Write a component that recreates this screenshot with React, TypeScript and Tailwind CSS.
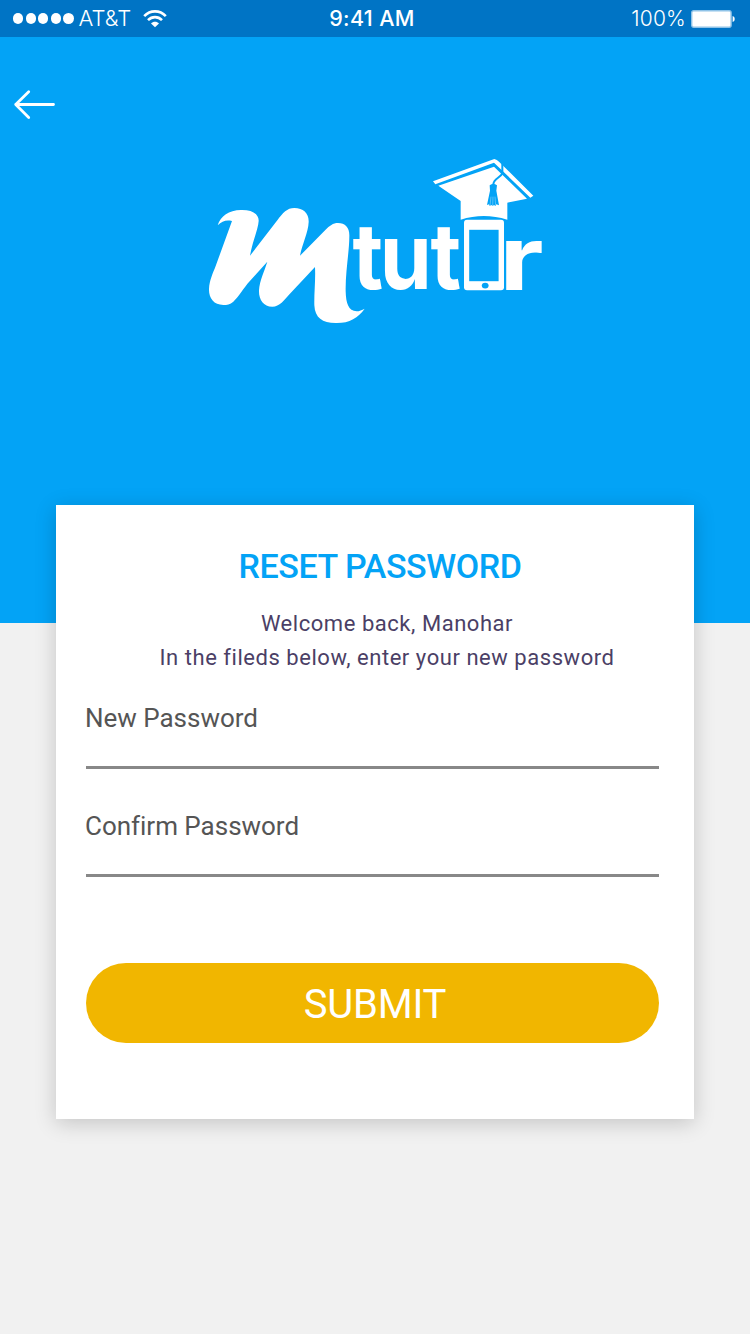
const signalDots = [0, 1, 2, 3, 4];

function StatusBar() {
  return (
    <div className="flex h-[37px] items-center bg-[#0074c5] px-3 font-['Inter',sans-serif] text-white">
      <div className="flex flex-1 items-center">
        <div className="flex gap-[2.4px] pl-px">
          {signalDots.map((dot) => (
            <span key={dot} className="size-[10.2px] rounded-full bg-white" />
          ))}
        </div>
        <span className="ml-[5px] pb-px text-[22px] leading-none font-light">AT&amp;T</span>
        <svg className="ml-[11.5px] h-[18px] w-6" viewBox="0 0 24 18" fill="none" stroke="white" strokeWidth="2.6">
          <path d="M1.2 6.2C7.2 -0.2 16.8 -0.2 22.8 6.2" />
          <path d="M5 10.1C9 6.1 15 6.1 19 10.1" />
          <path d="M12 17.2L8 13.4C10.2 11.2 13.8 11.2 16 13.4Z" fill="white" stroke="none" />
        </svg>
      </div>
      <span className="mr-[6px] text-[21.5px] leading-none font-medium tracking-[0.35px]">9:41 AM</span>
      <div className="flex flex-1 items-center justify-end">
        <span className="text-[21px] leading-none font-light tracking-[0.2px]">100%</span>
        <svg className="ml-[5px] mr-[2px] h-[18px] w-[45px]" viewBox="0 0 45 18">
          <rect x="0.7" y="0.7" width="39.4" height="16.6" rx="2" fill="white" stroke="#8fc3e8" strokeWidth="1.4" />
          <path d="M41.6 6C44.4 6.5 44.4 11.5 41.6 12Z" fill="white" />
        </svg>
      </div>
    </div>
  );
}

function Logo() {
  return (
    <svg
      className="mt-[33px] ml-[205px] h-[172px] w-[342px]"
      viewBox="205 155 342 172"
      fill="white"
      role="img"
      aria-label="Mtutor"
    >
      <g transform="translate(200 200) scale(0.33333)">
        <path d="M53 76C62 48 86 31 123 30C158 29 177 43 176 63C175 86 157 126 150 167L232 61C249 38 261 24 283 24C310 24 327 40 326 66C325 96 306 135 300 167L376 90C389 77 399 69 414 69C436 69 449 84 448 108C448 156 436 214 437 274C438 310 445 333 470 334C478 334 486 330 494 326C474 354 447 370 407 369C367 369 345 354 343 316C342 281 347 240 345 201L267 284C253 299 239 320 217 320C190 320 176 298 177 271C179 241 193 214 202 185L149 244C131 264 114 293 100 305C90 314 81 315 70 315C41 315 26 294 27 267C28 241 39 219 47 198L96 63C79 59 66 63 53 76Z" />
      </g>
      <g fontFamily="Inter, sans-serif" fontWeight="700" fontSize="88">
        <text transform="translate(352.6 289.4) scale(0.95 1.03)" x="0 28.6 82" y="0">
          tut
        </text>
        <text transform="translate(499.6 290) scale(1.23 1.01)">r</text>
      </g>
      <rect x="464" y="219.8" width="40" height="70.4" rx="3" />
      <rect x="469.2" y="229.8" width="29.4" height="51.4" fill="#03a3f6" />
      <ellipse cx="485.2" cy="285.6" rx="3.4" ry="2.9" fill="#03a3f6" />
      <g transform="translate(425 150) scale(0.33333)">
        <path d="M24 94L208 27Q216 29 222 35L325 137L316 143L207 38L31 103Z" />
        <path d="M40 107L207 50L306 146L247 158V209Q176 187 107 209V153Z" />
        <path d="M232 42V70C226 84 206 85 205 103" fill="none" stroke="#03a3f6" strokeWidth="6" />
        <path d="M194 106Q205 96 216 106L214 122L222 166L214 163L212 168L207 165L203 168L199 165L194 168L192 163L186 165L195 122Z" fill="#03a3f6" />
        <path d="M198 140L195 167M204 140L203 168M210 140L212 167" fill="none" stroke="white" strokeWidth="1" />
      </g>
    </svg>
  );
}

function Field({ label, id }: { label: string; id: string }) {
  return (
    <div className="mb-[6px] h-[102px] border-b-[3px] border-[#888888]">
      <label htmlFor={id} className="-ml-px block pt-[36px] text-[26px] leading-[30px] tracking-[-0.02px] text-[#555555]">
        {label}
      </label>
      <input id={id} type="password" className="block h-[30px] w-full bg-transparent outline-none" />
    </div>
  );
}

export default function App() {
  return (
    <div className="h-[1334px] w-[750px] overflow-hidden bg-[#f1f1f1] font-['Roboto',sans-serif]">
      <header className="h-[623px] bg-[#03a3f6]">
        <StatusBar />
        <button type="button" aria-label="Back" className="mt-[52px] ml-[13px] block h-[33px] w-[44px]">
          <svg
            className="h-[33px] w-[44px]"
            viewBox="0 0 44 33"
            fill="none"
            stroke="white"
            strokeWidth="2.8"
            strokeLinecap="round"
            strokeLinejoin="round"
          >
            <path d="M15.7 2.8L2.7 15.5L15.7 28.4M2.7 15.5H40.5" />
          </svg>
        </button>
        <Logo />
      </header>
      <main className="relative -mt-[118px] ml-14 h-[614px] w-[638px] bg-white px-[30px] pt-[41px] shadow-[0_4px_20px_rgba(0,0,0,0.19)]">
        <h1 className="pl-[10px] text-center text-[34px] leading-[40px] font-medium tracking-[-0.42px] whitespace-nowrap text-[#03a3f6]">
          RESET PASSWORD
        </h1>
        <p className="mt-[21px] -mr-[24px] text-center text-[22px] leading-[34px] tracking-[0.54px] whitespace-nowrap text-[#4b3f66]">
          Welcome back, Manohar
          <br />
          In the fileds below, enter your new password
        </p>
        <form className="-mt-[8px] w-[573px]" onSubmit={(event) => event.preventDefault()}>
          <Field label="New Password" id="new-password" />
          <Field label="Confirm Password" id="confirm-password" />
          <button
            type="submit"
            className="mt-[80px] h-20 w-full rounded-full bg-[#f1b600] pt-[3px] pl-[5px] text-center text-[40px] leading-[77px] tracking-[-0.2px] text-white"
          >
            SUBMIT
          </button>
        </form>
      </main>
    </div>
  );
}
